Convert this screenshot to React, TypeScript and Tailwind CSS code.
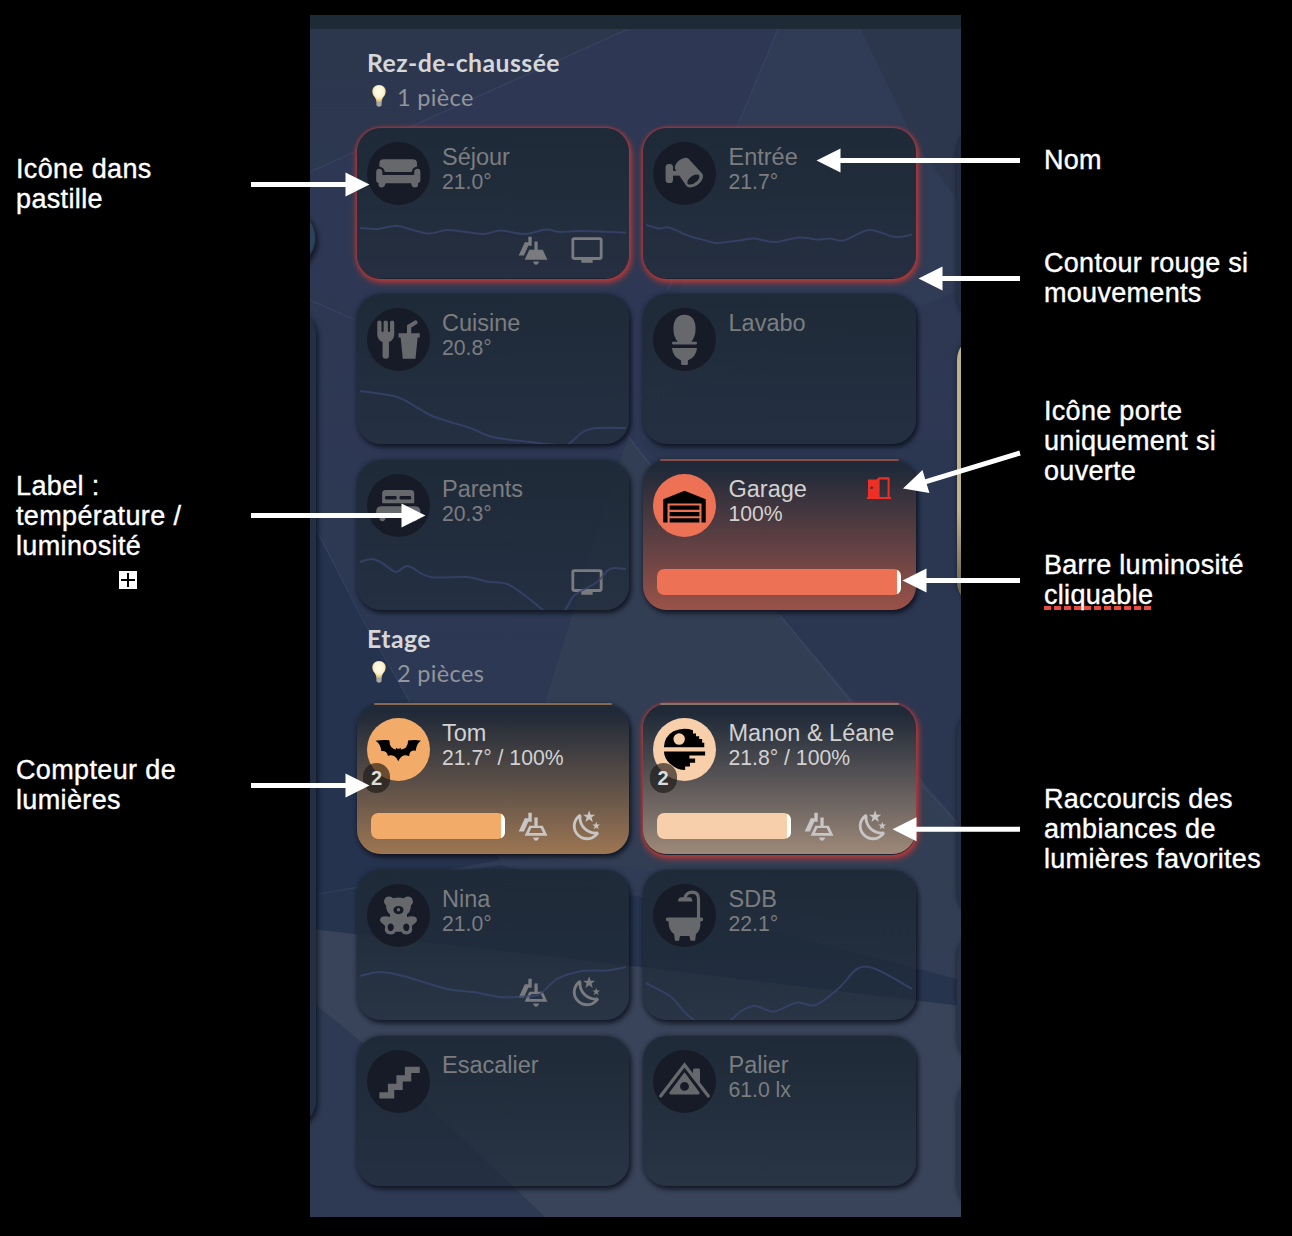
import type { ReactNode } from "react";

type Point = [number, number];

/* ---------- room icons (24 unit grid) ---------- */

const roomIcons: Record<string, ReactNode> = {
  sofa: (
    <>
      <path d="M5 5.3H18.7Q20.7 5.3 20.7 7.2V8.7Q18.6 9.1 18.2 11.3H5.6Q5.2 9.1 3 8.7V7.2Q3 5.3 5 5.3Z" />
      <path d="M2.8 9.8Q4.4 9.8 4.4 11.5V12.7H19.4V11.5Q19.4 9.8 20.9 9.8Q22.3 9.8 22.3 11.4V15.3Q22.3 16.4 21.2 16.5V17.6Q21 18.6 19.9 18.6Q18.2 18.6 17.9 16.6H5.9Q5.6 18.6 4 18.6Q2.8 18.6 2.6 17.6V16.5Q1.5 16.4 1.5 15.3V11.4Q1.5 9.8 2.8 9.8Z" />
    </>
  ),
  camera: (
    <>
      <rect x="3.1" y="7.5" width="3.5" height="9" rx="1.6" />
      <rect x="6" y="10.8" width="4" height="2.2" />
      <path
        fillRule="evenodd"
        d="M8 7.5Q9.3 5.3 12.3 4.6Q13.2 4.4 13.9 5.1L20.3 12Q21.3 13.4 19.9 15.6Q18 18 14.9 18.6Q13.6 18.8 12.8 17.8L7.7 10.1Q7.1 8.7 8 7.5ZM18.7 12.6Q16.4 12.1 14.2 14.3Q12.9 15.8 13.6 17Q15.8 17.7 18 15.5Q19.6 13.8 18.7 12.6Z"
      />
    </>
  ),
  food: (
    <path d="M3,3A1,1 0 0,0 2,4V8L2,9.5C2,11.19 3.03,12.63 4.5,13.22V19.5A1.5,1.5 0 0,0 6,21A1.5,1.5 0 0,0 7.5,19.5V13.22C8.97,12.63 10,11.19 10,9.5V8L10,4A1,1 0 0,0 9,3A1,1 0 0,0 8,4V8A0.5,0.5 0 0,1 7.5,8.5A0.5,0.5 0 0,1 7,8V4A1,1 0 0,0 6,3A1,1 0 0,0 5,4V8A0.5,0.5 0 0,1 4.5,8.5A0.5,0.5 0 0,1 4,8V4A1,1 0 0,0 3,3M19.88,3C19.75,3 19.62,3.09 19.5,3.16L16,5.25V9H12V11H13L14,21H20L21,11H22V9H18V6.34L20.5,4.84C21,4.56 21.13,4 20.84,3.5C20.63,3.14 20.26,2.95 19.88,3Z" />
  ),
  toilet: (
    <>
      <path d="M12 .4Q17.2 .7 17.2 7Q17.2 10.7 15.2 13H17.4Q17.9 13 17.9 13.7Q17.9 14.3 17.4 14.3H6.6Q6.1 14.3 6.1 13.7Q6.1 13 6.6 13H8.8Q6.8 10.7 6.8 7Q6.8 .7 12 .4Z" />
      <path d="M6.1 16H17.9Q17.5 20.2 13.6 21.9V23.4Q13.6 24 13 24H11Q10.4 24 10.4 23.4V21.9Q6.5 20.2 6.1 16Z" />
    </>
  ),
  bed: (
    <>
      <path
        fillRule="evenodd"
        d="M6 4.7H17.8Q19.4 4.7 19.4 6.3V10.9H4.3V6.3Q4.3 4.7 6 4.7ZM6.2 7.5Q5.6 7.5 5.6 8.3T6.2 9.2H10.6Q11.2 9.2 11.2 8.3T10.6 7.5ZM13 7.5Q12.4 7.5 12.4 8.3T13 9.2H17.4Q18 9.2 18 8.3T17.4 7.5Z"
      />
      <path d="M4 12.3H19.8Q22.3 12.3 22.3 14.8V16.2Q22.3 17.2 21 17.2V18Q20.8 19.4 19.5 19.4T18 17.2H6Q5.8 19.4 4.5 19.4T3 18V17.2Q1.5 17.2 1.5 16.2V14.8Q1.5 12.3 4 12.3Z" />
    </>
  ),
  garage: (
    <path d="M22 9V20H20V11H4V20H2V9L12 5L22 9M19 12H5V14H19V12M19 18H5V20H19V18M19 15H5V17H19V15Z" />
  ),
  bat: (
    <path d="M1.2 7.9Q4.4 7.3 7.7 7.6Q7.7 9.9 8.8 11Q9.9 11.9 10.8 12V11.1L11.4 11.7H12.4L13 11.1V12Q14.3 11.9 15.5 11Q16.6 9.7 16.5 7.8Q19.8 7.1 22.6 7.9Q20.5 9 20.1 12.6Q18.7 12.2 17.7 13.1Q17.1 13.8 17 15.2Q15.2 14.1 13.4 15.4Q12.4 16.2 11.9 17.5Q11.2 15.9 10.1 15.2Q8.5 14.3 7 15Q6.7 12.5 3.9 12.7Q3.6 9.4 1.2 7.9Z" />
  ),
  deathstar: (
    <>
      <path
        fillRule="evenodd"
        d="M2.3 10.9Q2.6 5.7 6.8 3.4Q11.2 1.3 16 2.9V4.5H17.4V5.8H18.9V7.1H20.3V8.8H21.3V10.9ZM9.5 4.4A2.7 2.7 0 1 0 9.5 9.8A2.7 2.7 0 1 0 9.5 4.4Z"
      />
      <path d="M2.3 12.9H21.7V14.8H14.3V16.2H17V18.2H14.6V20H12.3V21.7Q8.6 21.6 5.8 19.2Q2.6 16.8 2.3 12.9Z" />
    </>
  ),
  bear: (
    <path
      fillRule="evenodd"
      d="M7.6 3.1Q8.9 3.1 9.5 3.9Q12 3.2 14.5 3.9Q15.1 3.1 16.4 3.1A2.3 2.3 0 0 1 17.9 7.2Q17.8 10.3 16 11.4V12.7Q18.6 11.9 20.2 12.8Q21.4 14.4 19.8 15.6Q18.5 16.3 18.3 17.1Q19.1 20.9 15.8 20.9Q13.7 20.9 13.4 19.7H10.6Q10.3 20.9 8.2 20.9Q4.9 20.9 5.7 17.1Q5.5 16.3 4.2 15.6Q2.6 14.4 3.8 12.8Q5.4 11.9 8 12.7V11.4Q6.2 10.3 6.1 7.2A2.3 2.3 0 0 1 7.6 3.1ZM12 7.5Q9.8 7.6 9.6 9.3Q9.7 11.2 12 11.4Q14.3 11.2 14.4 9.3Q14.2 7.6 12 7.5ZM12 8.5A.8.8 0 1 1 12 10.1A.8.8 0 1 1 12 8.5ZM8.3 15.8Q6.8 16.1 6.9 17.6Q7.1 19.3 8.3 19.4Q9.7 19.2 9.8 17.4Q9.6 15.9 8.3 15.8ZM15.7 15.8Q14.4 15.9 14.2 17.4Q14.3 19.2 15.7 19.4Q16.9 19.3 17.1 17.6Q17.2 16.1 15.7 15.8Z"
    />
  ),
  bath: (
    <>
      <path d="M12.2 4Q12.6 1 15.9 1Q18.6 1.2 18.6 4.2V13.5" fill="none" stroke="currentColor" strokeWidth="1.5" />
      <path d="M10.2 3.4H14.4Q15.7 3.5 15.7 5.4H9Q9 3.6 10.2 3.4Z" />
      <path d="M4 12.9H20.1Q20.8 12.9 20.8 13.8T20.1 14.7H19.5Q19.7 19.3 17.4 20.7L17 23.9H14.8L14.3 21.7H9.9L9.4 23.9H7.5L7.1 20.7Q4.5 19.3 4.5 14.7H4Q3.2 14.7 3.2 13.8T4 12.9Z" />
    </>
  ),
  stairs: <path d="M15,5V9H11V13H7V17H3V20H10V16H14V12H18V8H22V5H15Z" />,
  attic: (
    <>
      <path d="M.8 18.8L12 4.2L23.2 18.8" fill="none" stroke="currentColor" strokeWidth="1.5" strokeLinecap="round" />
      <path d="M16 9.2V6.6Q16 5.9 16.7 5.9H18.6Q19.3 5.9 19.3 6.6V13Z" />
      <path fillRule="evenodd" d="M12 7.6L19.1 17.2Q19.2 18.1 18.6 18.1H5.4Q4.8 18.1 4.9 17.2ZM12 12.2A2.1 2.1 0 1 0 12 16.4A2.1 2.1 0 1 0 12 12.2Z" />
    </>
  ),
};

/* ---------- shortcut icons ---------- */

const lampBack = "M8.7 2.6H11.1V9H8.7L5.6 15.8H1.9L6.2 6.6H8.7Z";

const actionIcons: Record<string, ReactNode> = {
  lamps: (
    <>
      <path d={lampBack} />
      <path d="M13 6H15.3V11.8H18.9L22.2 18.9H6.1L9.4 11.8H13ZM12 20.2H16.3Q15.8 22.4 14.2 22.4T12 20.2Z" />
    </>
  ),
  lampsOutline: (
    <>
      <path d={lampBack} />
      <path
        fillRule="evenodd"
        d="M13 6H15.3V11.8H18.9L22.2 18.9H6.1L9.4 11.8H13ZM10.8 13.4L9.2 17H19.1L17.4 13.4ZM12 20.2H16.3Q15.8 22.4 14.2 22.4T12 20.2Z"
      />
    </>
  ),
  tv: (
    <path d="M21,17H3V5H21M21,3H3A2,2 0 0,0 1,5V17A2,2 0 0,0 3,19H8V21H16V19H21A2,2 0 0,0 23,17V5A2,2 0 0,0 21,3Z" />
  ),
  night: (
    <path d="M17.75,4.09L15.22,6.03L16.13,9.09L13.5,7.28L10.87,9.09L11.78,6.03L9.25,4.09L12.44,4L13.5,1L14.56,4L17.75,4.09M21.25,11L19.61,12.25L20.2,14.23L18.5,13.06L16.8,14.23L17.39,12.25L15.75,11L17.81,10.95L18.5,9L19.19,10.95L21.25,11M18.97,15.95C19.8,15.87 20.69,17.05 20.16,17.8C19.84,18.25 19.5,18.67 19.08,19.07C15.17,23 8.84,23 4.94,19.07C1.03,15.17 1.03,8.83 4.94,4.93C5.34,4.53 5.76,4.17 6.21,3.85C6.96,3.32 8.14,4.21 8.06,5.04C7.79,7.9 8.75,10.87 10.95,13.06C13.14,15.26 16.1,16.22 18.97,15.95M17.33,17.97C14.5,17.81 11.7,16.64 9.53,14.5C7.36,12.31 6.2,9.5 6.04,6.68C3.23,9.82 3.34,14.64 6.35,17.66C9.37,20.67 14.19,20.78 17.33,17.97Z" />
  ),
};

/* ---------- data ---------- */

type Theme = { card: string; accent: string; line: string };

const off = "bg-linear-to-b from-[#1e2a37] to-[#1e2a37]/60";

const themes: Record<string, Theme> = {
  red: { card: "bg-linear-to-b from-[#1f2938] from-5% to-[#9a5248]", accent: "bg-[#ed7155]", line: "bg-[#8a4d45]" },
  orange: { card: "bg-linear-to-b from-[#1f2937] from-5% to-[#9d7652]", accent: "bg-[#f3ab69]", line: "bg-[#86694f]" },
  peach: { card: "bg-linear-to-b from-[#1f2937] from-5% to-[#9e8979]", accent: "bg-[#f8cfab]", line: "bg-[#85766c]" },
};

type Room = {
  name: string;
  label?: string;
  icon: string;
  motion?: boolean;
  theme?: string;
  lights?: number;
  door?: boolean;
  actions?: string[];
  trend?: Point[];
};

const groundFloor: Room[] = [
  {
    name: "Séjour", label: "21.0°", icon: "sofa", motion: true, actions: ["lamps", "tv"],
    trend: [[3, 100], [21, 101], [40, 98], [71, 105.5], [91, 102], [126, 106], [143, 102.5], [168, 106], [189, 101.5], [203, 104], [225, 103], [269, 104.5]],
  },
  {
    name: "Entrée", label: "21.7°", icon: "camera", motion: true,
    trend: [[3, 97], [16, 100.5], [26, 99.5], [46, 108], [61, 112], [74, 115], [96, 112.5], [111, 110.5], [131, 114], [156, 109.5], [174, 111.5], [187.5, 110.5], [201, 112.5], [226, 102], [252, 109], [269, 106.5]],
  },
  {
    name: "Cuisine", label: "20.8°", icon: "food",
    trend: [[3, 97], [21, 99.5], [43, 104], [73, 121], [90, 127], [116, 135], [135, 143], [173, 148], [200, 151], [210, 151], [226, 138], [240, 134], [269, 134]],
  },
  { name: "Lavabo", icon: "toilet" },
  {
    name: "Parents", label: "20.3°", icon: "bed", actions: ["tv"],
    trend: [[3, 102], [15, 99], [25, 103], [39, 112], [51, 106], [73, 117], [110, 117], [130, 121.5], [150, 124], [170, 137], [186, 150], [197, 156], [208, 150], [218, 135], [240, 122], [253, 109], [269, 109]],
  },
  { name: "Garage", label: "100%", icon: "garage", theme: "red", door: true },
];

const upstairs: Room[] = [
  { name: "Tom", label: "21.7° / 100%", icon: "bat", theme: "orange", lights: 2, actions: ["lampsOutline", "night"] },
  { name: "Manon & Léane", label: "21.8° / 100%", icon: "deathstar", theme: "peach", lights: 2, motion: true, actions: ["lampsOutline", "night"] },
  {
    name: "Nina", label: "21.0°", icon: "bear", actions: ["lampsOutline", "night"],
    trend: [[3, 106], [23, 102], [46, 106], [90, 119], [116, 122], [143, 127], [166, 126.5], [183, 124], [200, 109], [225, 101], [250, 100.5], [269, 97]],
  },
  {
    name: "SDB", label: "22.1°", icon: "bath",
    trend: [[3, 113], [27.5, 126.5], [41, 141.5], [51, 150], [69, 158], [87.5, 150], [99, 140.5], [112.5, 136], [131, 141.5], [154, 132.5], [172.5, 135], [196, 118], [214, 99], [232.5, 99], [269, 119]],
  },
  { name: "Esacalier", icon: "stairs" },
  { name: "Palier", label: "61.0 lx", icon: "attic" },
];

/** Smooth curve through the points (Catmull-Rom turned into cubic segments). */
function curve(points: Point[]) {
  let d = `M${points[0][0]} ${points[0][1]}`;
  for (let i = 0; i < points.length - 1; i++) {
    const a = points[Math.max(i - 1, 0)];
    const b = points[i];
    const c = points[i + 1];
    const e = points[Math.min(i + 2, points.length - 1)];
    d += `C${b[0] + (c[0] - a[0]) / 6} ${b[1] + (c[1] - a[1]) / 6} ${c[0] - (e[0] - b[0]) / 6} ${c[1] - (e[1] - b[1]) / 6} ${c[0]} ${c[1]}`;
  }
  return d;
}

/* ---------- components ---------- */

function RoomCard({ room }: { room: Room }) {
  const theme = room.theme ? themes[room.theme] : undefined;
  const shadow = room.motion
    ? "shadow-[0_1px_0_#1a2230,0_0_3px_1px_#9c3a40,1px_3px_6px_1px_#cf3a31]"
    : "shadow-[0_0_4px_rgba(15,20,35,0.5),2px_3px_5px_rgba(8,12,22,0.75)]";
  return (
    <div className={`relative h-[150px] rounded-[24px] ${shadow}`}>
      <div className={`relative flex h-full flex-col justify-between overflow-hidden rounded-[24px] ${theme ? theme.card : room.motion ? "bg-linear-to-b from-[#1e2a37] to-[#252f41]" : off}`}>
        <div className="flex pl-[10px] pt-[14px]">
          <div
            className={`grid size-[63px] shrink-0 place-items-center rounded-full ${theme ? `${theme.accent} text-black` : "bg-[#161b27] text-[#66686c]"}`}
          >
            <svg viewBox="0 0 24 24" className="size-[51px]" fill="currentColor">
              {roomIcons[room.icon]}
            </svg>
          </div>
          <div className={`ml-[12.5px] mt-[1.5px] whitespace-nowrap ${theme ? "text-[#d2d2d3]" : "text-[#7b7d80]"}`}>
            <div className="text-[23.5px] leading-[27px]">{room.name}</div>
            <div className="-mt-[1.5px] text-[21.2px] leading-[25px]">{room.label}</div>
          </div>
          {room.door && (
            <svg viewBox="0 0 24 22" className="ml-auto mr-[25px] mt-[2.5px] h-[22px] w-6" fill="#ee3024">
              <path fillRule="evenodd" d="M1 2.5H9.5L11.8 .3H21.2Q22.6 .3 22.6 1.7V20H24V22H0V20H1ZM12.6 2.5V20H20.6V2.5ZM4.7 9.4A1.3 1.3 0 1 0 4.7 12A1.3 1.3 0 1 0 4.7 9.4Z" />
            </svg>
          )}
        </div>
        <div className={`flex items-center pl-[14px] ${room.actions ? "pb-[11px] pr-[25.5px]" : "pb-[15px] pr-[15px]"}`}>
          {theme && (
            <div className={`h-[26px] rounded-[7px] bg-black/30 ${room.actions ? "w-[134px]" : "flex-1"}`}>
              <div className={`flex h-full justify-end overflow-hidden rounded-[7px] ${theme.accent}`}>
                <div className="w-[4px] bg-white" />
              </div>
            </div>
          )}
          <div className={`ml-auto flex gap-[20px] ${theme ? "text-[#c8c6c4]" : "text-[#797b7e]"}`}>
            {room.actions?.map((a) => (
              <svg key={a} viewBox="0 0 24 24" className="size-[34px]" fill="currentColor">
                {actionIcons[a]}
              </svg>
            ))}
          </div>
        </div>
        {room.trend && (
          <svg viewBox="0 0 272.5 150" className="absolute inset-0 h-full w-full" fill="none">
            <path d={curve(room.trend)} stroke="#3a4670" strokeOpacity="0.75" strokeWidth="2" />
          </svg>
        )}
      </div>
      {theme && <div className={`absolute inset-x-[17px] -top-px h-[2px] rounded-full ${theme.line}`} />}
      {room.lights && (
        <div className="absolute left-[6.5px] top-[59px] grid h-[30px] w-[27px] place-items-center rounded-full bg-[#1c1815]/65 text-[20px] font-bold text-[#dcdcdc]">
          {room.lights}
        </div>
      )}
    </div>
  );
}

function Bulb() {
  return (
    <svg viewBox="0 0 14 22" className="h-[22px] w-[14px]">
      <defs>
        <radialGradient id="glow" cx="50%" cy="40%" r="60%">
          <stop offset="0" stopColor="#fffef0" />
          <stop offset="0.6" stopColor="#fbf3cf" />
          <stop offset="1" stopColor="#d9b45e" />
        </radialGradient>
      </defs>
      <path d="M7 0Q13.7 .4 13.8 6.8Q13.4 10.5 11 12.6Q9.8 14.6 9.7 17H4.3Q4.2 14.6 3 12.6Q.6 10.5 .2 6.8Q.3 .4 7 0Z" fill="url(#glow)" />
      <path d="M4.4 17H9.6V20Q9.3 21.8 7 21.8T4.4 20Z" fill="#a9a9a4" />
    </svg>
  );
}

function Floor({ title, count, rooms, heading }: { title: string; count: string; rooms: Room[]; heading: string }) {
  return (
    <section>
      <div className={`ml-[10.5px] font-[Lato] ${heading}`}>
        <h2 className="text-[24.8px] font-bold leading-[30px] tracking-[0.45px] text-[#d6d7d9]">{title}</h2>
        <div className="mt-[4px] flex h-[30px] items-center pl-[5px] text-[23.5px] leading-[30px] tracking-[0.35px] text-[#92959c]">
          <div className="-mt-[2px]">
            <Bulb />
          </div>
          <span className="ml-[11px]">{count}</span>
        </div>
      </div>
      <div className="mt-[16px] grid grid-cols-2 gap-x-[14px] gap-y-[16px]">
        {rooms.map((r) => (
          <RoomCard key={r.name} room={r} />
        ))}
      </div>
    </section>
  );
}

function Backdrop() {
  return (
    <svg viewBox="310 15 651 1202" className="absolute inset-0 h-full w-full">
      <defs>
        <linearGradient id="base" x1="0" y1="0" x2="0" y2="1">
          <stop offset="0" stopColor="#2c374e" />
          <stop offset="0.35" stopColor="#2e3854" />
          <stop offset="0.6" stopColor="#2c3953" />
          <stop offset="1" stopColor="#394359" />
        </linearGradient>
      </defs>
      <rect x="310" y="15" width="651" height="1202" fill="url(#base)" />
      <path d="M310 172L628 29H778L737 127L640 400L400 320L310 290Z" fill="#2e3854" />
      <path d="M778 29H861L914 140L961 205V290L860 330L640 400L737 127Z" fill="#303b55" />
      <path d="M861 29H961V205L914 140Z" fill="#2c374e" />
      <path d="M310 520L410 702L500 860L310 895Z" fill="#26334e" />
      <path d="M628 436L780 615L961 825V960L640 868L500 855L545 702Z" fill="#323e54" />
      <path d="M640 440L961 440V825L780 615Z" fill="#2b3751" />
      <path d="M310 896L500 865L640 897L961 980V1006L640 967L310 929Z" fill="#27344e" />
      <path d="M310 929L640 967L961 1006V1217H540L310 1005Z" fill="#394359" />
      <path d="M310 1000L365 1045L545 1217H310Z" fill="#2e3953" />
      <g fill="none" stroke="#414d72" strokeOpacity="0.5" strokeWidth="1.3">
        <path d="M310 172L628 29M778 29L737 127L668 290M310 300L355 320M780 615L851 702M922 785L961 827M628 436L650 465M319 535L362 618L410 702" />
      </g>
      <rect x="310" y="15" width="651" height="14" fill="#1e2a36" />
    </svg>
  );
}

function Arrow({ x, y, tx, ty }: { x: number; y: number; tx: number; ty: number }) {
  const length = Math.hypot(tx - x, ty - y);
  const angle = (Math.atan2(ty - y, tx - x) * 180) / Math.PI;
  return (
    <g transform={`translate(${x} ${y}) rotate(${angle})`}>
      <path d={`M0 -2.5H${length - 24}V-12L${length} 0L${length - 24} 12V2.5H0Z`} />
    </g>
  );
}

const arrows = [
  { x: 251, y: 184.5, tx: 369.5, ty: 184.5 },
  { x: 251, y: 515.5, tx: 425.5, ty: 515.5 },
  { x: 251, y: 785.5, tx: 369.5, ty: 785.5 },
  { x: 1020, y: 160.5, tx: 816.5, ty: 160.5 },
  { x: 1020, y: 278.5, tx: 918.5, ty: 278.5 },
  { x: 1020, y: 453, tx: 903, ty: 488.5 },
  { x: 1020, y: 580.5, tx: 902.5, ty: 580.5 },
  { x: 1020, y: 829.3, tx: 892.5, ty: 829.3 },
];

function Note({ lines, className = "" }: { lines: ReactNode[]; className?: string }) {
  return (
    <p className={`whitespace-nowrap ${className}`}>
      {lines.map((l, i) => (
        <span key={i} className="block">{l}</span>
      ))}
    </p>
  );
}

export default function App() {
  return (
    <main className="relative flex h-[1236px] w-[1292px] overflow-hidden bg-black font-['Liberation_Sans',sans-serif]">
      <aside className="w-[310px] pl-[16px] pt-[153.5px] text-[27px] leading-[30px] tracking-[0.36px] text-white [-webkit-text-stroke:0.4px_white]">
        <Note lines={["Icône dans", "pastille"]} />
        <Note className="mt-[257px]" lines={["Label :", "température /", "luminosité"]} />
        <div className="ml-[103px] mt-[10.5px] grid size-[18px] place-items-center bg-white">
          <svg viewBox="0 0 14 14" className="size-[14px]" stroke="#000" strokeWidth="2">
            <path d="M7 0V14M0 7H14" />
          </svg>
        </div>
        <Note className="mt-[165.5px]" lines={["Compteur de", "lumières"]} />
      </aside>

      <div className="relative mt-[15px] flex h-[1202px] w-[651px] overflow-hidden">
        <Backdrop />
        <div className="relative w-[7px] shrink-0">
          <div className="ml-[-54px] mt-[193px] size-[60px] rounded-full border border-[#1f2a3a] bg-[#2b415c] shadow-[2px_3px_5px_rgba(8,12,22,0.75)]" />
          <div className="ml-[-54px] mt-[42px] h-[815px] w-[60px] rounded-[24px] bg-[#233044] shadow-[2px_3px_5px_rgba(8,12,22,0.75)]" />
        </div>
        <div className="relative ml-[39.5px] w-[559px] shrink-0">
          <Floor title="Rez-de-chaussée" count="1 pièce" rooms={groundFloor} heading="pt-[33px]" />
          <Floor title="Etage" count="2 pièces" rooms={upstairs} heading="pt-[14px]" />
        </div>
        <div className="relative ml-[41.5px] w-[60px] shrink-0">
          <div className="mt-[113px] h-[192px] rounded-[24px] bg-[#253044] shadow-[0_0_5px_rgba(8,12,22,0.6)]" />
          <div className="mt-[16px] h-[270px] rounded-[24px] bg-linear-to-b from-[#bfb287] from-65% to-[#5c5641] shadow-[0_0_5px_rgba(8,12,22,0.5)]" />
          <div className="mt-[104px] h-[207px] rounded-[24px] bg-[#263147] shadow-[0_0_5px_rgba(8,12,22,0.6)]" />
          <div className="mt-[16px] h-[130px] rounded-[24px] bg-[#2a3549] shadow-[0_0_5px_rgba(8,12,22,0.6)]" />
          <div className="mt-[16px] h-[130px] rounded-[24px] bg-[#2a3549] shadow-[0_0_5px_rgba(8,12,22,0.6)]" />
        </div>
      </div>

      <aside className="w-[331px] pl-[83px] pt-[144.5px] text-[27px] leading-[30px] tracking-[0.3px] text-white [-webkit-text-stroke:0.4px_white]">
        <Note lines={["Nom"]} />
        <Note className="mt-[73px]" lines={["Contour rouge si", "mouvements"]} />
        <Note className="mt-[88px]" lines={["Icône porte", "uniquement si", "ouverte"]} />
        <Note
          className="mt-[64px]"
          lines={[
            "Barre luminosité",
            <span key="word" className="relative inline-block">
              cliquable
              <span className="absolute left-0 top-[26px] h-[4px] w-[107px] bg-[repeating-linear-gradient(90deg,#e74c3c_0_7px,transparent_7px_10px)]" />
            </span>,
          ]}
        />
        <Note className="mt-[174px]" lines={["Raccourcis des", "ambiances de", "lumières favorites"]} />
      </aside>

      <svg viewBox="0 0 1292 1236" className="pointer-events-none absolute inset-0 h-full w-full" fill="#fff">
        {arrows.map((a) => (
          <Arrow key={`${a.tx}-${a.ty}`} {...a} />
        ))}
      </svg>
    </main>
  );
}
